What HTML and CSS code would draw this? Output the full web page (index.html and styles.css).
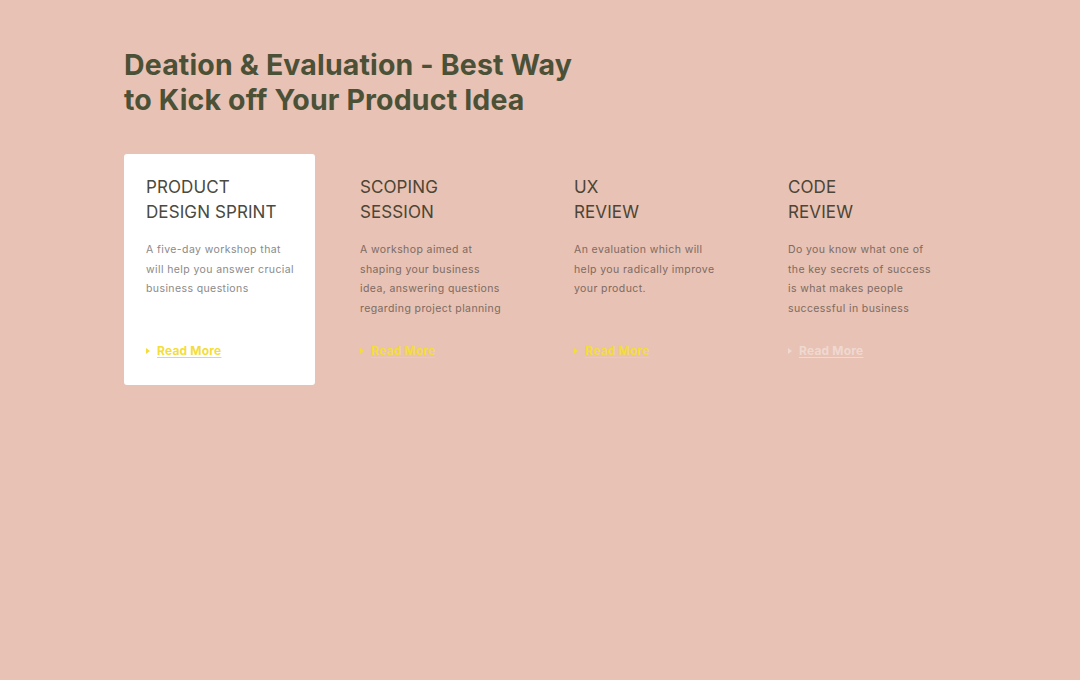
FILE: index.html
```html
<!DOCTYPE html>
<html lang="en">
<head>
<meta charset="utf-8">
<title>Deation &amp; Evaluation</title>
<link rel="stylesheet" href="styles.css">
</head>
<body>
<main class="page">
  <h1 class="heading">Deation &amp; Evaluation - Best Way<br>to Kick off Your Product Idea</h1>
  <section class="cards">
    <article class="card card--active">
      <h2 class="card-title">PRODUCT<br>DESIGN SPRINT</h2>
      <p class="card-text">A five-day workshop that<br>will help you answer crucial<br>business questions</p>
      <a class="more" href="#"><span class="arrow"></span><span class="more-label">Read More</span></a>
    </article>
    <article class="card">
      <h2 class="card-title">SCOPING<br>SESSION</h2>
      <p class="card-text">A workshop aimed at<br>shaping your business<br>idea, answering questions<br>regarding project planning</p>
      <a class="more" href="#"><span class="arrow"></span><span class="more-label">Read More</span></a>
    </article>
    <article class="card">
      <h2 class="card-title">UX<br>REVIEW</h2>
      <p class="card-text">An evaluation which will<br>help you radically improve<br>your product.</p>
      <a class="more" href="#"><span class="arrow"></span><span class="more-label">Read More</span></a>
    </article>
    <article class="card">
      <h2 class="card-title">CODE<br>REVIEW</h2>
      <p class="card-text">Do you know what one of<br>the key secrets of success<br>is what makes people<br>successful in business</p>
      <a class="more more--faded" href="#"><span class="arrow"></span><span class="more-label">Read More</span></a>
    </article>
  </section>
</main>
</body>
</html>
```

FILE: styles.css
```css
html, body {
  margin: 0;
  padding: 0;
}
body {
  background: #e8c2b4;
  font-family: "Inter", "Open Sans", sans-serif;
  width: 1080px;
  height: 680px;
  overflow: hidden;
}
.page {
  padding: 47px 0 0 124px;
}
.heading {
  margin: 0;
  font-size: 28.5px;
  line-height: 35px;
  font-weight: 700;
  color: #4b5137;
  letter-spacing: 0.15px;
}
.cards {
  margin-top: 37px;
  display: grid;
  grid-template-columns: repeat(4, 191px);
  column-gap: 23px;
}
.card {
  height: 231px;
  box-sizing: border-box;
  padding: 21px 22px 0 22px;
  border-radius: 3px;
  display: flex;
  flex-direction: column;
}
.card--active {
  background: #ffffff;
}
.card-title {
  margin: 0;
  font-size: 17px;
  line-height: 25px;
  font-weight: 400;
  color: #4c4535;
  letter-spacing: 0.1px;
}
.card--active .card-title {
  color: #4a4a40;
}
.card-text {
  margin: 15px 0 0 0;
  font-size: 10.5px;
  line-height: 19.5px;
  color: #7d6a62;
  height: 78px;
  letter-spacing: 0.4px;
  white-space: nowrap;
}
.card--active .card-text {
  color: #8a8a8a;
}
.more {
  margin-top: 25px;
  display: flex;
  align-items: center;
  gap: 7px;
  text-decoration: none;
  color: #f4dd3a;
  font-size: 12px;
  font-weight: 700;
  letter-spacing: 0.2px;
}
.arrow {
  width: 0;
  height: 0;
  border-top: 3px solid transparent;
  border-bottom: 3px solid transparent;
  border-left: 4px solid currentColor;
}
.more-label {
  text-decoration: underline;
  text-underline-offset: 2px;
}
.more--faded {
  color: #efd9d1;
}
```
